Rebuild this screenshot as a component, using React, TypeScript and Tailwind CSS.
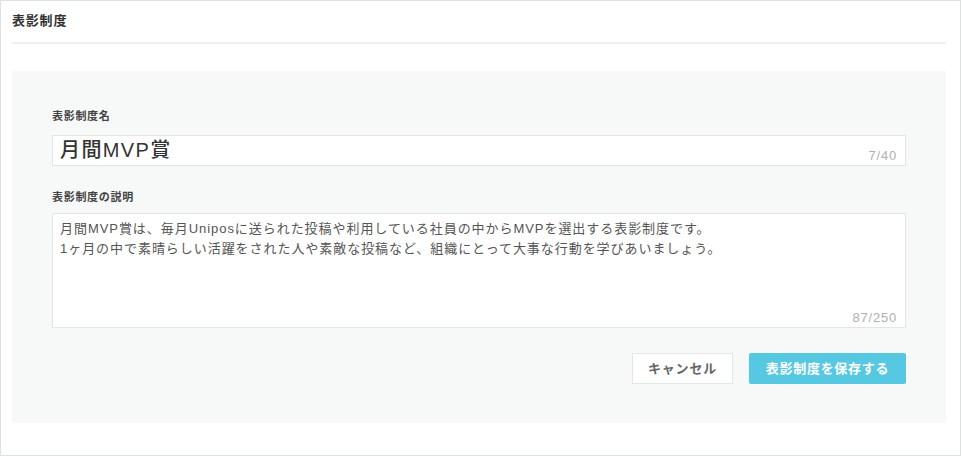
import { useState } from "react";

const NAME_MAX = 40;
const DESC_MAX = 250;

const App = () => {
  const [name] = useState("月間MVP賞");
  const [description] = useState(
    "月間MVP賞は、毎月Uniposに送られた投稿や利用している社員の中からMVPを選出する表影制度です。\n1ヶ月の中で素晴らしい活躍をされた人や素敵な投稿など、組織にとって大事な行動を学びあいましょう。",
  );

  return (
    <div className="w-[961px] h-[456px] border border-[#dde1e2] bg-white pl-[11px] pr-[14px] font-['Liberation_Sans','Noto_Sans_CJK_JP',sans-serif]">
      {/* Header */}
      <div className="pt-[12px] pb-[13px] border-b-2 border-[#eceeef]">
        <h1 className="text-[13px] leading-[16px] font-bold tracking-[0.8px] text-[#333]">表影制度</h1>
      </div>

      {/* Form panel */}
      <div className="mt-[27px] bg-[#f7f8f8] px-[40px] pt-[38px] pb-[39px]">
        <p className="text-[11px] leading-[14px] font-bold tracking-[0.7px] text-[#444]">表影制度名</p>
        <div className="relative mt-[12px] h-[31px] border border-[#e3e6e7] bg-white pl-[7px] flex items-center">
          <span className="text-[20px] leading-[29px] font-medium tracking-[1.4px] text-[#333]">{name}</span>
          <span className="absolute right-[8px] bottom-[2px] text-[13px] leading-[15px] tracking-[0.8px] text-[#adb1b3]">
            7/{NAME_MAX}
          </span>
        </div>

        <p className="mt-[24px] text-[11px] leading-[14px] font-bold tracking-[0.7px] text-[#444]">表影制度の説明</p>
        <div className="relative mt-[9px] h-[115px] border border-[#e3e6e7] bg-white pl-[7px] pt-[5px]">
          <p className="whitespace-pre-line text-[13px] leading-[20px] tracking-[0.95px] text-[#555]">{description}</p>
          <span className="absolute right-[8px] bottom-[2px] text-[13px] leading-[15px] tracking-[0.8px] text-[#adb1b3]">
            87/{DESC_MAX}
          </span>
        </div>

        <div className="mt-[25px] flex justify-end gap-[16px]">
          <button
            type="button"
            className="w-[101px] h-[31px] border border-[#e3e6e7] bg-white text-[13px] font-bold tracking-[0.8px] text-[#666]"
          >
            キャンセル
          </button>
          <button
            type="button"
            className="w-[157px] h-[31px] rounded-[2px] bg-[#57c8e1] text-[13px] font-bold tracking-[0.7px] text-white"
          >
            表影制度を保存する
          </button>
        </div>
      </div>
    </div>
  );
};

export default App;
